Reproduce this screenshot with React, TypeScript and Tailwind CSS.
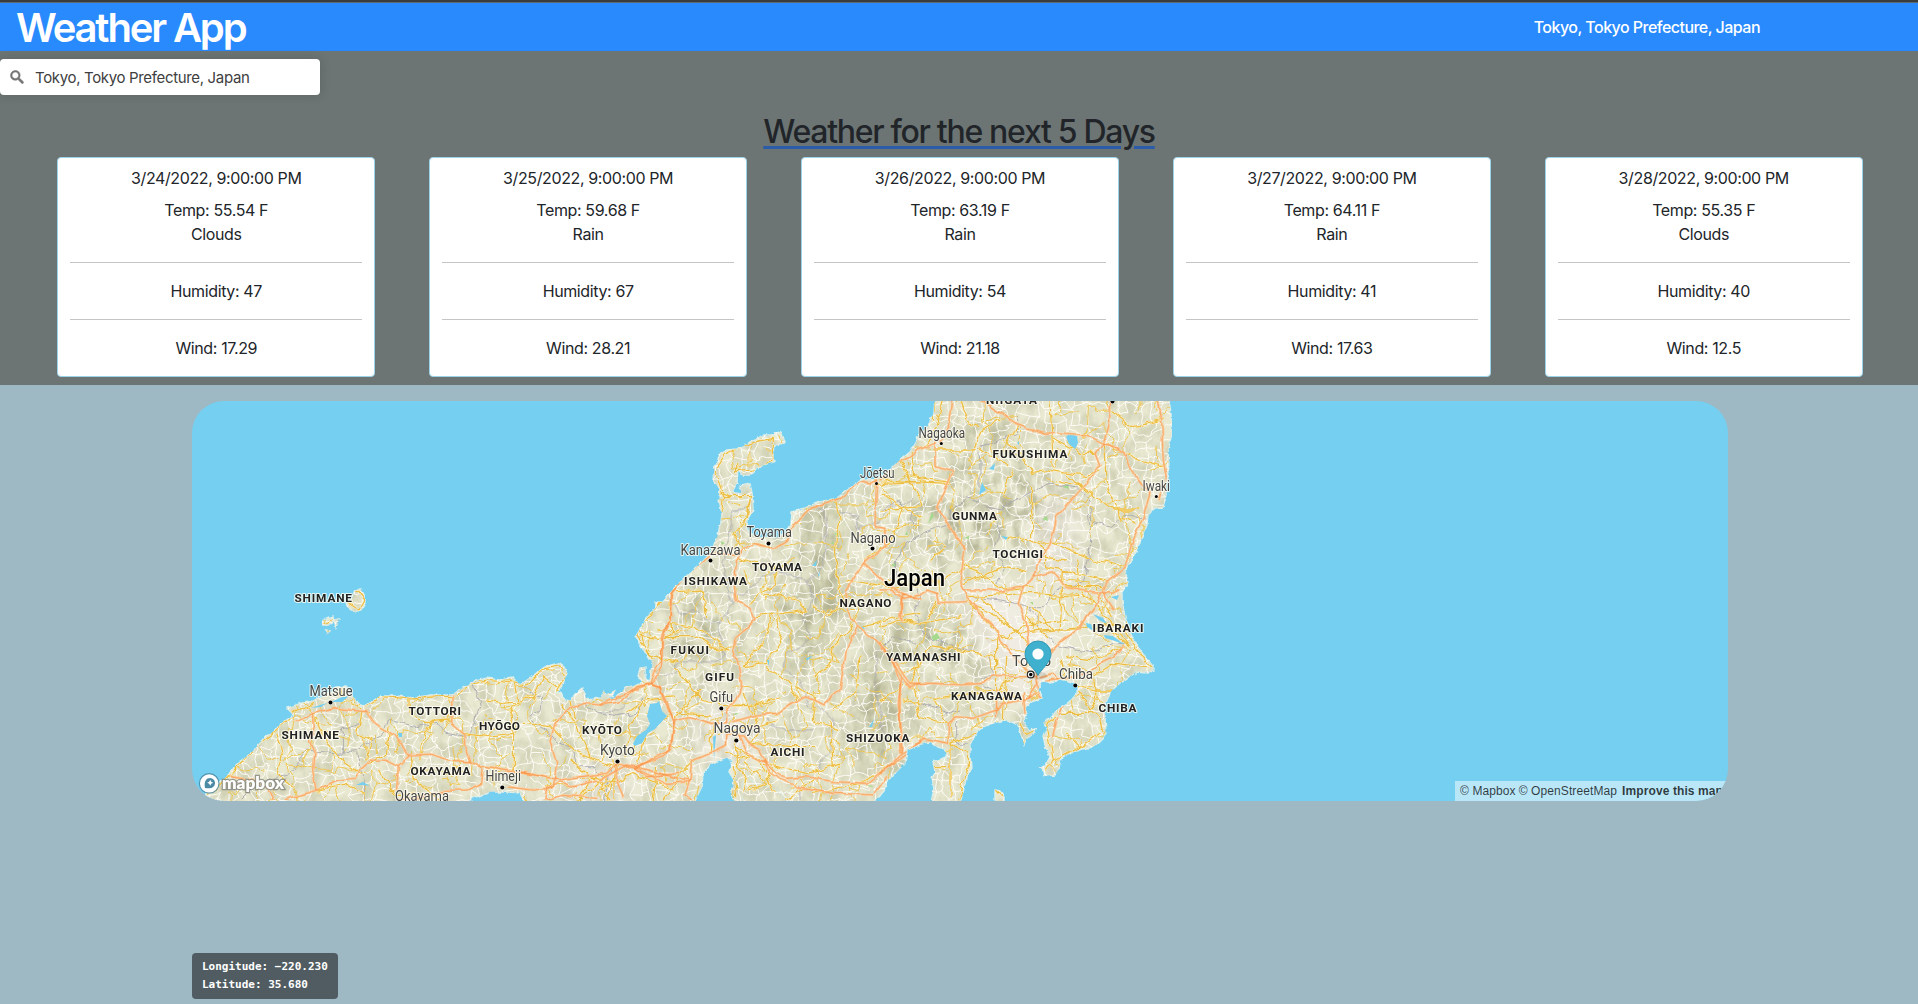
import React from "react";

const forecast = [
  { date: "3/24/2022, 9:00:00 PM", temp: "55.54", sky: "Clouds", humidity: "47", wind: "17.29" },
  { date: "3/25/2022, 9:00:00 PM", temp: "59.68", sky: "Rain", humidity: "67", wind: "28.21" },
  { date: "3/26/2022, 9:00:00 PM", temp: "63.19", sky: "Rain", humidity: "54", wind: "21.18" },
  { date: "3/27/2022, 9:00:00 PM", temp: "64.11", sky: "Rain", humidity: "41", wind: "17.63" },
  { date: "3/28/2022, 9:00:00 PM", temp: "55.35", sky: "Clouds", humidity: "40", wind: "12.5" },
];

const coast =
  "M205 796 L213 787 222 781 230 773 236 765 243 760 253 751 263 740 270 734 277 728 284 721 292 718 294 715 287 708 302 703 311 702 320 697 337 688 346 687 350 692 353 697 362 707 370 703 380 696 397 696 413 698 430 695 453 695 459 690 467 686 476 681 487 678 499 680 513 678 520 685 530 678 539 671 545 667 558 663 564 667 567 673 562 687 557 692 561 694 565 700 571 701 575 694 582 688 585 694 587 700 600 698 604 691 607 697 613 699 621 692 627 687 635 686 643 683 638 676 640 668 645 667 645 677 650 682 652 663 646 652 640 647 640 641 636 636 643 625 645 620 651 613 657 607 655 602 663 602 670 593 676 586 683 580 692 572 707 557 713 547 717 537 721 523 722 513 719 500 720 490 713 480 714 470 718 460 719 454 727 450 737 449 750 443 763 435 774 435 776 432 782 433 785 443 774 445 773 455 774 462 766 464 757 468 750 475 743 475 738 470 737 483 732 492 740 494 743 486 750 484 752 493 753 510 747 520 746 528 752 535 763 537 775 538 787 533 791 524 792 512 799 510 807 507 820 502 837 498 846 491 860 481 866 479 873 480 882 476 890 470 899 461 910 452 916 443 918 437 928 425 934 413 935 398 L1169 398 1171 415 1172 433 1168 450 1169 467 1166 482 1166 496 1163 507 1155 508 1148 515 1147 524 1142 537 1138 547 1132 559 1125 570 1128 583 1122 592 1122 601 1125 617 1129 630 1135 643 1143 654 1152 665 1154 670 1147 673 1137 672 1127 678 1120 683 1112 690 1107 700 1104 709 1105 717 1106 733 1100 742 1093 747 1082 749 1070 753 1061 758 1059 768 1055 775 1045 776 1043 768 1038 767 1045 766 1050 757 1045 745 1043 736 1048 728 1043 722 1050 719 1057 710 1069 703 1078 692 1078 684 1070 681 1060 679 1050 682 1042 681 1038 690 1042 698 1030 702 1026 708 1027 715 1023 721 1029 731 1035 729 1033 734 1026 739 1024 745 1020 731 1018 725 1012 722 1003 720 990 724 983 727 977 732 973 739 970 743 970 754 971 768 966 777 963 793 960 803 L931 803 934 789 932 778 935 773 933 761 942 760 947 758 945 749 937 747 930 742 923 743 914 747 907 750 905 763 896 772 888 780 884 790 873 803 L742 803 743 784 747 774 752 781 759 784 770 789 777 789 785 798 785 803 L735 803 731 794 734 780 729 772 733 759 724 758 710 764 703 773 702 786 694 803 L525 803 520 793 510 792 500 792 490 792 485 794 472 798 467 803 L195 803Z M354 592 L360 589 365 596 365 603 361 610 355 612 348 608 346 603 352 599Z M322 621 L328 619 332 617 333 622 328 625 322 625Z M334 620 L339 619 336 627Z M326 630 L330 631 328 633Z M995 790 L1000 791 1004 796 1004 803 995 803Z M740 486 L748 483 746 490 741 492Z M600 698 L604 696 615 691 612 696 606 698Z";

const lakes =
  "M650 704 L657 703 659 701 662 711 667 716 655 729 648 733 642 743 635 746 633 744 637 736 646 730 650 724 647 716Z M1066 437 L1070 433 1077 436 1078 443 1075 449 1069 444Z M1093 614 L1103 618 1107 624 1099 620Z M1086 623 L1091 624 1094 631 1087 627Z M1104 635 L1113 636 1125 645 1115 641 1105 638Z M1111 597 L1119 595 1117 600Z M331 702 L342 697 349 696 342 702Z M311 708 L320 705 327 703 321 707Z M812 566 L817 560 816 566Z M818 575 L820 571 819 577Z M398 733 h4 v4 h-3z M989 469 l6 -6 -1 7z M979 495 l3 -13 4 8z M1017 443 l2 -2 v4z M861 626 l4 2 -2 2z M713 737 l3 -2 -2 24z M869 727 l5 -8 -2 8z M356 785 l7 -3 7 4 -6 -1z M1001 536 l7 1 -2 3z M767 660 l2 0 v6z M805 659 l8 -4 -5 5z";

// Expressways, grouped by the tile whose local units the points use.
const westTrunk =
  "M345 485 L400 460 465 443 510 450 560 455 580 485 600 500 645 525 685 585 750 582 810 600 865 605 905 620 980 632 1060 645 1140 660 1200 650 1280 640 1310 610 1365 625 1410 600 1470 570 1485 480 M400 460 L403 500 390 540 402 570 398 630 408 690 M150 650 L220 660 260 680 280 720 M310 720 L410 690 470 660 525 655 540 630 575 600 615 600 655 620 690 585 M820 410 L815 490 855 525 860 575 870 605 M655 620 L650 690 M650 720 L740 710 800 690 860 690 905 670 910 620 M980 680 L1060 690 1100 685 1140 665 1180 680 1250 660 M1140 660 L1090 650 1020 635 M1365 625 L1400 650 1500 640 M1100 720 L1150 705 1250 715 M1110 545 L1125 490 1170 445 1210 430 1265 435 1320 425 1370 380 1415 370 M1410 370 L1425 325 1445 300 1447 240 1470 180 1472 100 1500 70 M1415 372 L1440 380 1470 460 1480 490 M1110 545 L1130 610 1120 680 1100 685 1095 720 M1310 610 L1305 650 1330 710";
const centralTrunk =
  "M0 915 L100 870 155 850 185 800 185 710 210 660 215 580 260 525 330 465 410 460 460 430 520 445 560 420 580 375 630 325 720 295 780 243 815 250 830 240 M830 240 L825 380 855 385 855 440 790 490 755 545 735 575 740 630 770 675 820 715 860 760 905 830 930 860 960 850 M790 490 L850 545 905 580 900 650 M905 580 L960 600 M155 850 L180 860 195 915 220 960 215 1040 190 1070 105 1100 80 1095 M220 960 L270 950 330 970 380 968 380 935 405 905 425 860 415 790 400 750 405 715 435 690 465 660 450 625 410 605 403 560 410 480 425 455 M400 965 L470 945 530 940 570 915 620 890 670 915 720 870 735 760 768 680 M105 1100 L180 1120 230 1135 270 1140 275 1080 350 1050 380 1035 380 1005 430 1005 450 1035 480 1050 500 1090 530 1120 560 1135 620 1130 700 1145 800 1150 850 1110 905 1075 960 1025 M105 1105 L200 1150 270 1145 M0 1140 L80 1095 M270 1140 L255 1185 275 1200 M415 1000 L440 1060 490 1085 M490 1080 L510 1120 600 1165 700 1180 820 1185 860 1130 M905 830 L895 910 905 1000 905 1060";
const eastTrunk =
  "M0 240 L50 185 90 170 115 150 165 130 165 200 220 215 170 325 190 350 225 405 255 450 245 510 240 550 260 590 300 640 350 690 360 720 400 765 450 820 M215 0 L205 80 180 130 M300 0 L370 45 410 75 500 100 520 98 M530 98 L620 105 670 130 715 145 740 170 760 220 810 280 790 350 760 420 735 500 680 545 650 610 595 685 545 720 520 745 480 780 470 830 M690 0 L685 70 670 130 645 160 660 200 610 260 530 350 520 400 510 430 470 500 460 530 430 560 415 610 440 670 445 740 470 820 M835 0 L845 60 850 180 860 240 835 300 M250 570 L330 570 360 575 410 560 430 560 460 530 520 515 560 560 640 575 700 580 720 570 M675 580 L680 600 700 630 M0 570 L30 570 70 595 120 585 140 570 170 580 175 608 260 605 M65 595 L65 660 M0 745 L50 790 90 850 160 850 240 855 310 850 340 825 400 830 470 830 M470 830 L480 890 530 920 M480 830 L520 820 530 835 M475 845 L440 900 400 905 370 910 350 930 280 955 230 950 205 970 205 1030 130 1015 70 1060 0 1120 M535 940 L585 870 580 850 M515 1010 L530 950 M500 840 L560 835 620 820 670 785 700 770 730 740 M0 730 L40 790 60 850 60 1060 M430 880 L435 940 M350 870 L350 950 M440 900 L470 880";

const westArterial =
  "M80 705 L130 665 190 600 245 545 325 480 340 455 400 430 M470 400 L530 435 570 430 600 410 680 415 760 408 820 410 870 375 930 362 1010 370 1040 375 1095 322 1140 315 1155 350 1130 390 1170 420 1180 470 M400 470 L430 530 490 600 540 640 M290 520 L310 580 290 640 340 680 M545 445 L530 520 570 540 560 600 M690 415 L690 470 740 485 810 480 M760 480 L720 560 720 600 M850 520 L920 530 1000 520 1000 640 M1000 370 L1010 420 990 460 1000 520 M920 420 L980 430 1060 415 1090 350 1130 380 M1030 490 L1110 500 1180 570 1250 600 1305 620 M1150 440 L1190 500 1230 590 M1305 600 L1305 720 M1280 640 L1200 720 M1340 460 L1400 420 1480 410 M1335 590 L1350 500 1390 430 M600 630 L640 700 720 700 M410 690 L500 670 550 700 M630 500 L620 580 570 610 M495 95 L530 90 555 120 540 150 500 125Z M430 190 L450 180 460 175 M1380 230 L1440 235 1500 210 M1440 120 L1380 210 1400 280 1440 300 M1200 720 L1240 650 1290 720 M1170 600 L1230 650 1300 670 M690 590 L700 660 780 720 M1420 290 L1500 305";
const centralArterial =
  "M350 200 L375 165 450 130 520 115 520 180 460 210 410 215 410 190 M345 215 L370 290 365 350 340 420 300 480 220 560 M370 290 L455 290 445 350 400 400 430 450 M455 290 L435 370 460 400 M350 270 L390 290 M210 570 L130 660 110 710 160 780 M210 600 L215 700 M210 670 L290 680 340 720 390 750 M190 710 L280 710 340 740 390 750 M225 575 L310 570 320 650 M410 470 L470 490 520 500 530 550 480 580 450 610 M465 650 L550 640 620 630 590 600 500 580 M510 650 L500 710 460 760 430 800 M530 660 L550 720 500 790 430 800 M500 800 L570 850 590 900 M710 300 L720 360 705 430 715 560 740 620 M640 620 L680 650 740 600 M840 250 L960 245 M850 280 L910 320 960 350 M850 390 L960 370 M790 480 L870 430 910 320 M740 540 L860 560 960 560 M780 680 L900 650 960 640 M780 770 L770 870 700 930 M760 680 L700 740 690 800 640 830 M590 860 L650 900 640 960 720 990 M540 890 L450 920 370 920 310 900 220 800 M230 940 L330 945 M225 955 L300 870 M430 880 L480 990 450 1030 580 1040 650 1040 M340 970 L330 1060 M405 1020 L410 1090 440 1140 430 1180 M380 1060 L480 1080 M360 1000 L460 980 530 960 M410 1040 L480 1090 520 1170 M490 1090 L620 1120 720 1090 M650 1130 L560 1200 M640 1180 L780 1150 860 1100 M700 1100 L690 960 M190 1200 L240 1120 280 1080 M0 1170 L100 1120 220 1170 M60 1090 L20 1200 M170 1100 L160 1200 M110 1090 L140 1000 210 940 M900 820 L960 800 M910 900 L960 910 M400 1100 L410 1190 M430 1080 L500 1150 450 1170";
const eastArterial =
  "M160 60 L165 0 M130 150 L170 70 190 0 M165 150 L280 150 300 100 360 60 M100 160 L100 230 200 245 M0 240 L200 250 M60 180 L130 320 0 330 M240 0 L260 60 300 80 M410 80 L380 130 430 170 460 220 500 210 620 230 660 210 M510 0 L520 200 M520 120 L600 160 650 160 M560 230 L610 260 530 240 M690 30 L760 80 850 60 M680 130 L780 180 850 200 M610 260 L700 330 780 330 M670 130 L680 260 720 350 770 370 M380 420 L430 410 500 445 M300 140 L380 200 M400 210 L370 280 M455 260 L455 410 M500 445 L500 500 550 510 540 700 M480 470 L560 480 M520 430 L640 480 740 500 M500 500 L680 540 M250 490 L370 570 460 560 M250 550 L370 500 440 520 M260 590 L460 580 600 590 M260 600 L420 700 520 690 M270 600 L370 720 M300 590 L450 740 M370 720 L420 680 560 660 M350 700 L350 760 M460 620 L520 690 600 690 M440 650 L500 710 M590 480 L600 570 690 660 750 740 M640 560 L700 650 M550 560 L680 560 M600 690 L720 670 760 730 810 800 M560 690 L680 680 750 740 M560 770 L640 780 740 740 M540 780 L560 850 640 870 750 870 M640 830 L700 790 800 800 M640 830 L650 910 620 940 540 940 M585 870 L660 960 670 1000 M530 950 L500 970 520 1080 500 1110 M560 1000 L600 1040 M520 1080 L600 1040 660 1000 M450 820 L370 850 340 900 M430 900 L350 870 240 880 160 900 M350 870 L350 700 M380 770 L370 960 290 1000 210 1030 210 1190 M160 900 L205 970 M210 1030 L265 1060 265 1100 240 1190 M160 1100 L210 1100 M420 970 L440 1000 460 990 M90 855 L120 780 150 740 350 770 M140 660 L170 610 M0 680 L60 660 120 670 240 650 M110 540 L190 540 250 500 M150 480 L200 440 160 420 M100 850 L120 950 200 970 M65 860 L0 900 M350 1170 L365 1190";

const borders = [
  "M180 720 L230 670 330 640 380 570 480 580 530 575 560 550 610 530 625 480 710 500 770 490 800 520 860 530 M880 370 L900 430 885 490 870 530 M490 580 L490 510 540 490 M530 580 L550 660 550 720 M1030 370 L1050 400 1085 410 1080 450 1050 470 1060 490 1110 520 1130 545 1180 570 1190 620 1240 620 1290 680 M1210 430 L1250 460 1310 470 1370 460 1390 410 M1290 620 L1270 720",
  "M640 320 L670 330 680 400 670 500 625 540 540 520 490 525 460 560 425 590 385 570 370 480 380 430 400 330 440 325 M385 570 L400 610 365 650 355 710 380 770 330 790 260 785 225 790 225 820 185 825 M210 590 L240 640 290 635 330 670 365 670 M625 540 L640 600 610 650 630 720 560 760 550 800 600 850 630 920 680 930 700 960 690 1050 650 1110 M720 340 L770 350 775 385 840 365 870 320 940 300 M640 990 L560 990 500 960 M95 885 L60 930 0 940 M600 1160 L600 1200 M870 720 L830 760 825 850 850 1000",
  "M410 50 L410 100 340 130 295 140 300 190 300 310 M300 310 L260 290 240 320 215 330 210 370 130 400 80 430 50 480 50 540 M310 320 L370 330 380 310 430 290 510 250 600 265 630 300 635 360 690 380 735 340 800 360 M350 370 L360 400 340 450 380 500 350 550 M625 340 L635 430 620 500 610 550 530 570 490 620 450 620 360 600 270 590 M450 620 L480 690 540 740 640 755 700 730 740 730 M110 540 L120 600 100 640 130 700 230 745 330 770 340 820 300 840 M0 745 L40 710 110 730 M300 850 L360 880 M120 910 L210 940 240 930 M0 330 L60 300 90 330 100 380 M230 960 L230 1030 260 1030",
];

const greens =
  "M834 534 l4 -2 1 6z M1063 487 l5 -3 1 5z M1042 519 l5 -3 1 5z M931 637 l6 -4 3 5 -6 3z M891 565 l5 -3 0 5z M905 535 l2 -4 1 4z M928 524 l4 -12 2 4z M720 541 l5 2 -3 2z M732 714 l7 -1 -3 2z M1030 602 l3 0 0 3z M866 785 l8 1 -3 1z M833 541 l-2 3 3 0z M964 538 l5 -2 0 3z";

type Label = [string, number, number, number];
const prefectures: Label[] = [
  ["SHIMANE", 294.5, 601.5, 57.5], ["SHIMANE", 281.5, 739, 57.5], ["TOTTORI", 408.5, 714.5, 52.5],
  ["HYŌGO", 479, 730, 41], ["KYŌTO", 582, 734, 40], ["OKAYAMA", 410.5, 774.7, 60],
  ["ISHIKAWA", 684, 584.5, 63], ["TOYAMA", 752, 571, 50], ["FUKUI", 670.5, 654, 38.5],
  ["GIFU", 705, 681, 29], ["AICHI", 770.5, 756, 34], ["NAGANO", 839.5, 607, 52],
  ["SHIZUOKA", 846, 742, 63.5], ["YAMANASHI", 886, 660.5, 74.5], ["FUKUSHIMA", 992.5, 457.7, 75],
  ["NIIGATA", 986, 404, 51], ["GUNMA", 952, 520, 45], ["TOCHIGI", 992.5, 558, 50.5],
  ["IBARAKI", 1092.5, 631.7, 51], ["KANAGAWA", 951, 700, 71], ["CHIBA", 1098.5, 711.7, 38],
];
const cities: Label[] = [
  ["Matsue", 309.5, 695.5, 43], ["Okayama", 395, 801, 54], ["Himeji", 485.5, 781, 35.5],
  ["Kyoto", 600, 754.5, 35], ["Gifu", 709.5, 701.5, 23.5], ["Nagoya", 713.5, 733, 47],
  ["Kanazawa", 680.5, 554.5, 60], ["Toyama", 746.5, 536.5, 45.5], ["Jōetsu", 860, 478, 34.5],
  ["Nagano", 850.5, 542.5, 45], ["Nagaoka", 918.5, 438, 46.5], ["Iwaki", 1142.5, 490.5, 27.5],
  ["Chiba", 1059, 679, 34], ["Tokyo", 1012, 666, 39],
];
const dots: [number, number, number][] = [
  [330.5, 702.5, 2], [502.3, 787.5, 2], [617.5, 761.5, 2.1], [721.3, 708.5, 2], [736.3, 740.5, 2.1],
  [710.5, 560.5, 2], [768.5, 543.5, 2], [876.5, 483.5, 1.5], [872.5, 548.5, 2], [941.3, 443.5, 1.5],
  [1156.3, 496.5, 1.5], [1075.3, 685.5, 2], [1112.5, 401.5, 2],
];

function seeded(seed: number) {
  let s = seed;
  return () => {
    s = (s * 1664525 + 1013904223) >>> 0;
    return s / 4294967296;
  };
}

// Local roads: a jittered lattice with some of its edges left out.
function roadLattice(seed: number, step: number, keep: number) {
  const rnd = seeded(seed);
  const cols = Math.ceil(990 / step) + 2;
  const rows = Math.ceil(410 / step) + 2;
  const pts: [number, number][][] = [];
  for (let r = 0; r < rows; r++) {
    const row: [number, number][] = [];
    for (let c = 0; c < cols; c++) {
      row.push([190 + (c + (rnd() - 0.5) * 0.95) * step, 396 + (r + (rnd() - 0.5) * 0.95) * step]);
    }
    pts.push(row);
  }
  let d = "";
  const link = (a: [number, number], b: [number, number]) => {
    if (rnd() > keep) return;
    const p1x = a[0] + (b[0] - a[0]) * 0.33 + (rnd() - 0.5) * step * 0.35;
    const p1y = a[1] + (b[1] - a[1]) * 0.33 + (rnd() - 0.5) * step * 0.35;
    const p2x = a[0] + (b[0] - a[0]) * 0.66 + (rnd() - 0.5) * step * 0.35;
    const p2y = a[1] + (b[1] - a[1]) * 0.66 + (rnd() - 0.5) * step * 0.35;
    d += `M${a[0].toFixed(1)} ${a[1].toFixed(1)}L${p1x.toFixed(1)} ${p1y.toFixed(1)} ${p2x.toFixed(1)} ${p2y.toFixed(1)} ${b[0].toFixed(1)} ${b[1].toFixed(1)}`;
  };
  for (let r = 0; r < rows; r++) {
    for (let c = 0; c < cols; c++) {
      if (c + 1 < cols) link(pts[r][c], pts[r][c + 1]);
      if (r + 1 < rows) link(pts[r][c], pts[r + 1][c]);
    }
  }
  return d;
}

const whiteRoads = roadLattice(17, 9, 0.74);
const yellowRoads = roadLattice(91, 17, 0.34);

const WEST = "translate(180 560) scale(0.33333)";
const CENTRAL = "translate(600 400) scale(0.33333)";
const EAST = "translate(880 400) scale(0.33333)";

function Roads({ west, central, east, color, width }: { west: string; central: string; east: string; color: string; width: number }) {
  return (
    <g fill="none" stroke={color} strokeWidth={width} strokeLinejoin="round" strokeLinecap="round">
      <path transform={WEST} d={west} />
      <path transform={CENTRAL} d={central} />
      <path transform={EAST} d={east} />
    </g>
  );
}

function JapanMap() {
  return (
    <svg className="block h-full w-full" viewBox="192 401 1536 400" preserveAspectRatio="none">
      <defs>
        <clipPath id="land"><path d={coast} /></clipPath>
        <filter id="wobble" x="0" y="0" width="100%" height="100%" colorInterpolationFilters="sRGB">
          <feTurbulence type="fractalNoise" baseFrequency="0.09" numOctaves="2" seed="4" result="n" />
          <feDisplacementMap in="SourceGraphic" in2="n" scale="8" xChannelSelector="R" yChannelSelector="G" />
        </filter>
        <filter id="sway" x="0" y="0" width="100%" height="100%" colorInterpolationFilters="sRGB">
          <feTurbulence type="fractalNoise" baseFrequency="0.08" numOctaves="2" seed="6" result="n" />
          <feDisplacementMap in="SourceGraphic" in2="n" scale="5" xChannelSelector="R" yChannelSelector="G" />
        </filter>
        <filter id="shore" x="0" y="0" width="100%" height="100%" colorInterpolationFilters="sRGB">
          <feTurbulence type="fractalNoise" baseFrequency="0.2" numOctaves="2" seed="9" result="n" />
          <feDisplacementMap in="SourceGraphic" in2="n" scale="4" xChannelSelector="R" yChannelSelector="G" />
        </filter>
        <filter id="relief" x="0" y="0" width="100%" height="100%" colorInterpolationFilters="sRGB">
          <feTurbulence type="fractalNoise" baseFrequency="0.075 0.05" numOctaves="4" seed="12" />
          <feColorMatrix values="0 0 0 0 0.62  0 0 0 0 0.62  0 0 0 0 0.48  2.4 0 0 0 -0.85" />
        </filter>
        <filter id="soft" x="-30%" y="-30%" width="160%" height="160%"><feGaussianBlur stdDeviation="13" /></filter>
        <mask id="mountains">
          <rect x="192" y="401" width="1000" height="400" fill="#6c6c6c" />
          <g fill="#fff" filter="url(#soft)">
            <path d="M810 505 L845 500 835 560 850 600 820 640 810 680 780 640 770 600 800 560Z" />
            <path d="M870 640 L900 620 905 760 865 770 850 700Z" />
            <path d="M900 520 L980 460 1060 480 1040 530 1000 560 940 560Z" />
            <path d="M900 610 L980 620 1000 650 960 680 910 660Z" />
            <path d="M675 590 L720 590 735 640 720 680 680 670Z" />
            <path d="M960 420 L1010 430 1000 480 970 480Z" />
          </g>
          <path d="M960 590 L1020 570 1080 590 1110 640 1050 690 1000 680Z" fill="#000" filter="url(#soft)" />
        </mask>
      </defs>
      <rect x="192" y="401" width="1536" height="400" fill="#75cff0" />
      <g filter="url(#shore)">
        <path d={coast} fill="#e9e9d2" stroke="#dff0ea" strokeWidth="1.4" />
      </g>
      <g clipPath="url(#land)">
        <g fill="#f0ece4" filter="url(#soft)">
          <path d="M955 590 L1010 590 1060 640 1040 690 1010 700 980 640Z" />
          <path d="M700 705 L745 700 760 760 700 760Z" />
          <path d="M590 765 L640 765 620 801 560 801Z" />
          <path d="M1030 500 L1070 490 1075 570 1040 600Z" />
        </g>
        <g fill="#c9c9a8" opacity="0.6" filter="url(#soft)">
          <path d="M815 505 L845 500 830 570 845 610 815 660 800 640Z" />
          <path d="M875 645 L895 640 895 750 870 765 860 700Z" />
        </g>
        <rect x="192" y="401" width="990" height="400" filter="url(#relief)" mask="url(#mountains)" opacity="0.72" />
        <path d={whiteRoads} fill="none" stroke="#fffefa" strokeWidth="0.9" strokeLinejoin="round" />
        <path d={greens} fill="#a5d98b" />
        <g filter="url(#wobble)">
          <g fill="none" stroke="#a5a4ac" strokeWidth="2.5" strokeLinejoin="round">
            <path transform={WEST} d={borders[0]} />
            <path transform={CENTRAL} d={borders[1]} />
            <path transform={EAST} d={borders[2]} />
          </g>
          <path d={yellowRoads} fill="none" stroke="#eec650" strokeWidth="1" />
          <Roads west={westArterial} central={centralArterial} east={eastArterial} color="#fdf6d8" width={6} />
          <Roads west={westArterial} central={centralArterial} east={eastArterial} color="#ebbd42" width={3.8} />
        </g>
      </g>
      <path d={lakes} fill="#75cff0" />
      <g clipPath="url(#land)">
        <g filter="url(#sway)">
          <Roads west={westTrunk} central={centralTrunk} east={eastTrunk} color="#fdf0d4" width={6.4} />
          <Roads west={westTrunk} central={centralTrunk} east={eastTrunk} color="#f8964a" width={4} />
        </g>
      </g>
      {dots.map(([x, y, r]) => (
        <circle key={`${x}-${y}`} cx={x} cy={y} r={r} fill="#000" stroke="#fff" strokeWidth="0.7" paintOrder="stroke" />
      ))}
      <circle cx="1030.7" cy="674.5" r="3.4" fill="#fff" stroke="#222" strokeWidth="1.1" />
      <circle cx="1030.7" cy="674.5" r="1.7" fill="#000" />
      <g stroke="#fffef4" strokeOpacity="0.8" strokeLinejoin="round" paintOrder="stroke">
        <g fontFamily="Roboto, sans-serif" fontWeight="700" fontSize="11.8" fill="#222" strokeWidth="2.2">
          {prefectures.map(([t, x, y, w]) => (
            <text key={`${t}-${y}`} x={x} y={y} textLength={w}>{t}</text>
          ))}
        </g>
        <g fontFamily="Roboto, sans-serif" fontSize="14" fill="#454545" strokeWidth="2">
          {cities.map(([t, x, y, w]) => (
            <text key={t} x={x} y={y} textLength={w} lengthAdjust="spacingAndGlyphs">{t}</text>
          ))}
        </g>
        <text x="884" y="585.5" textLength="61" lengthAdjust="spacingAndGlyphs" fontFamily="Roboto, sans-serif" fontWeight="500" fontSize="23" fill="#000" strokeWidth="2.5">Japan</text>
      </g>
      {/* location pin */}
      <ellipse cx="1038" cy="675.5" rx="9" ry="4" fill="#000" opacity="0.12" />
      <path d="M1038 675.5 C1036 670 1025 663 1025 654 A13 13 0 0 1 1051 654 C1051 663 1040 670 1038 675.5Z" fill="#3fb1ce" stroke="#3298b3" strokeWidth="1" />
      <circle cx="1038" cy="654" r="5.6" fill="#fff" />
      {/* provider mark */}
      <circle cx="209.2" cy="783.4" r="10.4" fill="#4b8aa5" opacity="0.85" />
      <circle cx="209.2" cy="783.4" r="9.2" fill="#fff" />
      <path d="M205 788 C203.6 781 206.5 778 210.2 778 A4.9 4.9 0 0 1 215 782.8 C215 787 211.5 789.3 205 788Z" fill="#4b8aa5" />
      <path d="M210.2 779.8 l1 2 2 1 -2 1 -1 2 -1 -2 -2 -1 2 -1z" fill="#fff" />
      <text x="222" y="788.5" textLength="62" lengthAdjust="spacingAndGlyphs" fontFamily="Lato, sans-serif" fontWeight="800" fontSize="17" fill="#fff" stroke="#85857a" strokeWidth="2.4" strokeOpacity="0.8" paintOrder="stroke">mapbox</text>
    </svg>
  );
}

export default function App() {
  return (
    <div className="flex h-[1004px] w-full flex-col overflow-hidden bg-[#9eb8c4] font-['Inter',sans-serif] text-[#212529]">
      <div className="h-[3px] shrink-0 border-b border-[#5f6a70] bg-[#3a3b3c]" />
      <header className="flex h-12 shrink-0 items-center justify-between bg-[#288afd] pl-4 pr-[158px] text-white">
        <h1 className="pt-0.5 text-[40px] font-semibold leading-[48px] tracking-[-2.15px]">Weather App</h1>
        <span className="text-base font-medium tracking-[-0.53px]">Tokyo, Tokyo Prefecture, Japan</span>
      </header>

      <section className="flex h-[334px] shrink-0 flex-col bg-[#6c7574] pt-2">
        <div className="flex h-9 w-80 shrink-0 items-center rounded bg-white pl-2 shadow-[0_0_10px_2px_rgba(0,0,0,0.1)]">
          <svg viewBox="0 0 18 18" className="h-[18px] w-[18px] fill-[#757575]">
            <path d="M7.4 2.5c-2.7 0-4.9 2.2-4.9 4.9s2.2 4.9 4.9 4.9c1 0 1.8-.2 2.5-.8l3.7 3.7c.2.2.4.3.8.3.7 0 1.1-.4 1.1-1.1 0-.3-.1-.5-.3-.8L11.4 10c.4-.8.8-1.6.8-2.5.1-2.8-2.1-5-4.8-5zm0 1.6c1.8 0 3.2 1.4 3.2 3.2s-1.4 3.2-3.2 3.2-3.3-1.3-3.3-3.1 1.4-3.3 3.3-3.3z" stroke="#757575" strokeWidth="0.5" />
          </svg>
          <span className="ml-[9px] pt-0.5 text-[15px] leading-5 tracking-[-0.34px] text-[#404040]">Tokyo, Tokyo Prefecture, Japan</span>
        </div>
        <h2 className="mt-[18px] h-[38px] shrink-0 text-center text-[32px] font-medium leading-[38px] tracking-[-1.3px] underline decoration-[#2a5caa] decoration-[3px] underline-offset-[3px]">
          Weather for the next 5 Days
        </h2>
        <div className="mt-1.5 grid h-[220px] grid-cols-5 gap-[53.4px] pl-[57px] pr-[55px]">
          {forecast.map((day) => (
            <article key={day.date} className="rounded border border-[#9bd3ea] bg-white px-3 pt-2 text-center text-base leading-6 tracking-[-0.38px]">
              <p className="mb-2">{day.date}</p>
              <p>Temp: {day.temp} F</p>
              <p>{day.sky}</p>
              <hr className="my-4 border-[#c4c5c6]" />
              <p>Humidity: {day.humidity}</p>
              <hr className="my-4 border-[#c4c5c6]" />
              <p>Wind: {day.wind}</p>
            </article>
          ))}
        </div>
      </section>

      <main className="mt-4 px-48">
        <div className="relative h-[400px] w-[1536px] overflow-hidden rounded-[32px]">
          <JapanMap />
          <div className="absolute bottom-0 right-0 flex h-5 w-[273px] items-center whitespace-nowrap bg-white/50 pl-[5px] font-['Liberation_Sans',sans-serif] text-[12px] tracking-[0.1px] text-black/75">
            <span>© Mapbox</span>
            <span className="ml-[3px]">© OpenStreetMap</span>
            <span className="ml-[5px] font-bold">Improve this map</span>
          </div>
        </div>
        <div className="mt-[152px] h-[46px] w-[146px] whitespace-nowrap rounded bg-[#505c61] px-2.5 pt-[5px] font-['DejaVu_Sans_Mono',monospace] text-[11px] font-bold leading-[18px] text-white">
          <p>Longitude: −220.230</p>
          <p>Latitude: 35.680</p>
        </div>
      </main>
    </div>
  );
}
